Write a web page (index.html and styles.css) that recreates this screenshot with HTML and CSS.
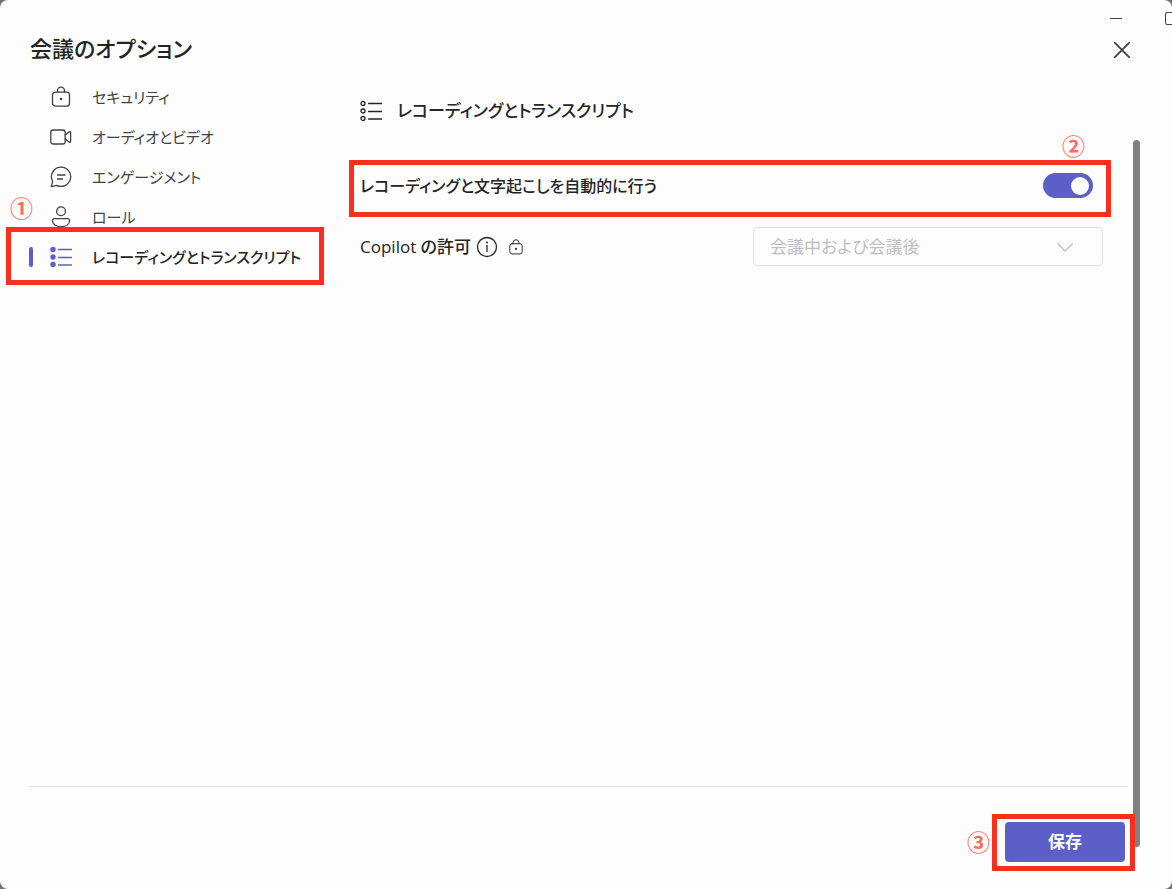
FILE: index.html
```html
<!DOCTYPE html>
<html lang="ja">
<head>
    <meta charset="UTF-8">
    <meta name="viewport" content="width=device-width, initial-scale=1.0">
    <title>会議のオプション</title>
    <link rel="stylesheet" href="styles.css">
</head>
<body>
    <header class="header">
        <h1 class="title">会議のオプション</h1>
        <div class="window-controls">
            <button class="icon-button minimize" aria-label="最小化">
                <svg width="12" height="12" viewBox="0 0 12 12"><path d="M0 5.5h12"/></svg>
            </button>
            <button class="icon-button maximize" aria-label="最大化">
                <svg width="13" height="13" viewBox="0 0 13 13"><rect x=".5" y=".5" width="12" height="12" rx="1.5"/></svg>
            </button>
        </div>
        <button class="icon-button close" aria-label="閉じる">
            <svg width="16" height="16" viewBox="0 0 16 16"><path d="M.7.7l14.6 14.6M15.3.7L.7 15.3"/></svg>
        </button>
    </header>

    <div class="content">
        <nav class="sidebar">
            <a class="nav-item" href="#security">
                <svg class="icon" viewBox="0 0 22 22"><rect x="2.5" y="6.2" width="17" height="14" rx="3"/><path d="M7.5 6V4.6a3.5 3.5 0 0 1 7 0V6"/><circle class="dot" cx="11" cy="13" r="1.3"/></svg>
                セキュリティ
            </a>
            <a class="nav-item" href="#audio-video">
                <svg class="icon" viewBox="0 0 22 22"><rect x=".8" y="4" width="14.4" height="14" rx="2.5"/><path d="M15.2 9l4.2-3.2q1.2-.6 1.2.6v9.2q0 1.2-1.2.6L15.2 13"/></svg>
                オーディオとビデオ
            </a>
            <a class="nav-item" href="#engagement">
                <svg class="icon" viewBox="0 0 22 22"><path d="M11.2 1.2a9.6 9.6 0 1 1-4.6 18.1L1.2 20.6l1.5-5.1A9.6 9.6 0 0 1 11.2 1.2zM7.5 9h7.5M7.5 13h5"/></svg>
                エンゲージメント
            </a>
            <a class="nav-item" href="#roles">
                <svg class="icon" viewBox="0 0 22 22"><circle cx="11" cy="5.2" r="4.4"/><path d="M4.5 12.7h13q2 0 2 2c0 3.6-3.5 6-8.5 6s-8.5-2.4-8.5-6q0-2 2-2z"/></svg>
                ロール
            </a>
            <a class="nav-item active" href="#recording">
                <svg class="icon" viewBox="0 0 22 22"><g class="dot"><circle cx="3" cy="3.5" r="2.7"/><circle cx="3" cy="11" r="2.7"/><circle cx="3" cy="18.5" r="2.7"/></g><path d="M8.5 3.5h13M8.5 11.5h13M8.5 19h13"/></svg>
                レコーディングとトランスクリプト
                <span class="frame"></span>
                <span class="step">①</span>
            </a>
        </nav>

        <main class="panel" id="recording">
            <h2 class="panel-title">
                <svg class="icon" viewBox="0 0 22 22"><circle cx="3" cy="3.5" r="2"/><circle cx="3" cy="11" r="2"/><circle cx="3" cy="18.5" r="2"/><path d="M8.5 3.5h13M8.5 11.5h13M8.5 19h13"/></svg>
                レコーディングとトランスクリプト
            </h2>

            <div class="row">
                <label for="auto-record">レコーディングと文字起こしを自動的に行う</label>
                <input class="toggle" type="checkbox" role="switch" id="auto-record" checked>
                <span class="frame"></span>
                <span class="step">②</span>
            </div>

            <div class="row">
                <div class="label-group">
                    <label for="copilot">Copilot の許可</label>
                    <svg class="icon info" viewBox="0 0 22 22"><circle cx="11" cy="11" r="9.5"/><path d="M11 9.5v6"/><circle class="dot" cx="11" cy="6.5" r="1"/></svg>
                    <svg class="icon lock" viewBox="0 0 22 22"><rect x="2.5" y="6.5" width="17" height="14" rx="3"/><path d="M7 6.5V5a4 4 0 0 1 8 0v1.5"/><circle class="dot" cx="11" cy="13.5" r="1.5"/></svg>
                </div>
                <div class="select-box">
                    <select id="copilot" disabled>
                        <option>会議中および会議後</option>
                    </select>
                    <svg class="chevron" width="16" height="9" viewBox="0 0 16 9"><path d="M.7.7L8 8 15.3.7"/></svg>
                </div>
            </div>
        </main>
    </div>

    <footer class="footer">
        <div class="save-box">
            <button class="save">保存</button>
            <span class="frame"></span>
            <span class="step">③</span>
        </div>
    </footer>

    <div class="scrollbar"></div>
</body>
</html>
```
FILE: styles.css
```css
* {
    box-sizing: border-box;
}

html {
    background-color: #707070;
}

body {
    position: relative;
    isolation: isolate;
    display: flex;
    flex-direction: column;
    min-height: 100vh;
    margin: 0;
    overflow: hidden;
    border-radius: 8px; /* Window corners */
    background-color: #fdfdfd;
    color: #242424;
    font-family: "Open Sans", "Noto Sans CJK JP", sans-serif;
    font-size: 17px;
    line-height: 24px;
    font-feature-settings: "palt";
}

svg {
    fill: none;
    stroke: currentColor;
    stroke-width: 1.3;
    stroke-linecap: round;
    stroke-linejoin: round;
}

.dot {
    fill: currentColor;
    stroke: none;
}

.icon {
    flex: none;
    width: 22px;
    height: 22px;
}

/* Header */
.header {
    height: 77px;
    padding: 32px 30px 0;
}

.title {
    margin: 0;
    font-size: 22px;
    font-weight: 500;
    line-height: 32px;
}

.icon-button {
    display: flex;
    padding: 0;
    border: none;
    background: none;
    color: #424242;
    cursor: pointer;
}

.window-controls {
    position: absolute;
    top: 12px;
    right: -6px;
    display: flex;
    align-items: center;
    gap: 43px;
}

.window-controls svg {
    stroke-width: 1;
}

.close {
    position: absolute;
    top: 42px;
    right: 42px;
}

.close svg {
    stroke-width: 1.8;
}

/* Sidebar and panel */
.content {
    display: flex;
    flex: 1;
}

.sidebar {
    flex: none;
    width: 360px;
    padding-left: 16px;
}

.nav-item {
    position: relative;
    display: flex;
    align-items: center;
    gap: 20px;
    width: 298px;
    height: 40px;
    padding-left: 34px;
    color: #424242;
    font-size: 15px;
    text-decoration: none;
    white-space: nowrap;
}

.nav-item.active {
    color: #242424;
    font-weight: 500;
}

.nav-item.active .icon {
    color: #5b5fc7;
}

.nav-item.active::before {
    content: "";
    position: absolute;
    left: 13px;
    width: 4px;
    height: 20px;
    border-radius: 2px;
    background-color: #5b5fc7;
}

.panel {
    flex: 1;
    padding: 18px 69px 0 0;
}

.panel-title {
    display: flex;
    align-items: center;
    gap: 15px;
    height: 32px;
    margin: 0 0 39px;
    font-size: 17px;
    font-weight: 500;
    white-space: nowrap;
}

.row {
    position: relative;
    display: flex;
    align-items: center;
    justify-content: space-between;
    height: 39px;
    margin-bottom: 22px;
    font-size: 16px;
    font-weight: 500;
    white-space: nowrap;
}

.label-group {
    display: flex;
    align-items: center;
    gap: 5px;
    font-size: 17px;
}

.lock {
    width: 16px;
    height: 16px;
    margin-left: 5px;
}

.toggle {
    appearance: none;
    display: flex;
    align-items: center;
    width: 50px;
    height: 25px;
    margin: 0 10px 0 0;
    padding: 0 4px;
    border-radius: 13px;
    background-color: #8a8a8a;
    cursor: pointer;
}

.toggle::before {
    content: "";
    width: 18px;
    height: 18px;
    border-radius: 50%;
    background-color: #fff;
}

.toggle:checked {
    justify-content: flex-end;
    background-color: #5b5fc7;
}

.select-box {
    position: relative;
    width: 350px;
}

.select-box select {
    appearance: none;
    display: block;
    width: 100%;
    height: 39px;
    padding: 0 16px;
    border: 1px solid #e0e0e0;
    border-radius: 4px;
    background: none;
    color: #bdbdbd;
    font: inherit;
    font-size: 17px;
    font-weight: 400;
    font-feature-settings: inherit;
    opacity: 1;
}

.chevron {
    position: absolute;
    top: 16px;
    right: 30px;
    color: #bdbdbd;
}

/* Footer */
.footer {
    display: flex;
    justify-content: flex-end;
    margin: 0 44px 0 29px;
    padding: 35px 3px 27px 0;
    border-top: 1px solid #e5e5e5;
}

.save-box {
    position: relative;
}

.save {
    display: block;
    width: 120px;
    height: 40px;
    border: none;
    border-radius: 4px;
    background-color: #5b5fc7;
    color: #fff;
    font: inherit;
    font-weight: 700;
    cursor: pointer;
}

/* Step markers */
.frame {
    position: absolute;
    inset: -6px -8px -12px -11px;
    border: 5px solid #ff2d20;
    pointer-events: none;
}

.nav-item .frame {
    inset: -10px -10px -8px;
}

.save-box .frame {
    inset: -8px -10px -9px -13px;
}

.step {
    position: absolute;
    color: #ff6b60;
    font-family: "Noto Sans CJK JP", sans-serif;
    font-size: 23px;
    font-weight: 700;
    line-height: 24px;
}

.nav-item .step {
    top: -42px;
    left: -6px;
}

.row .step {
    top: -33px;
    right: 18px;
}

.save-box .step {
    top: 7px;
    left: -38px;
}

.scrollbar {
    position: absolute;
    top: 140px;
    right: 32px;
    bottom: 42px;
    width: 7px;
    border-radius: 4px;
    background-color: #808080;
    z-index: -1;
}
```
